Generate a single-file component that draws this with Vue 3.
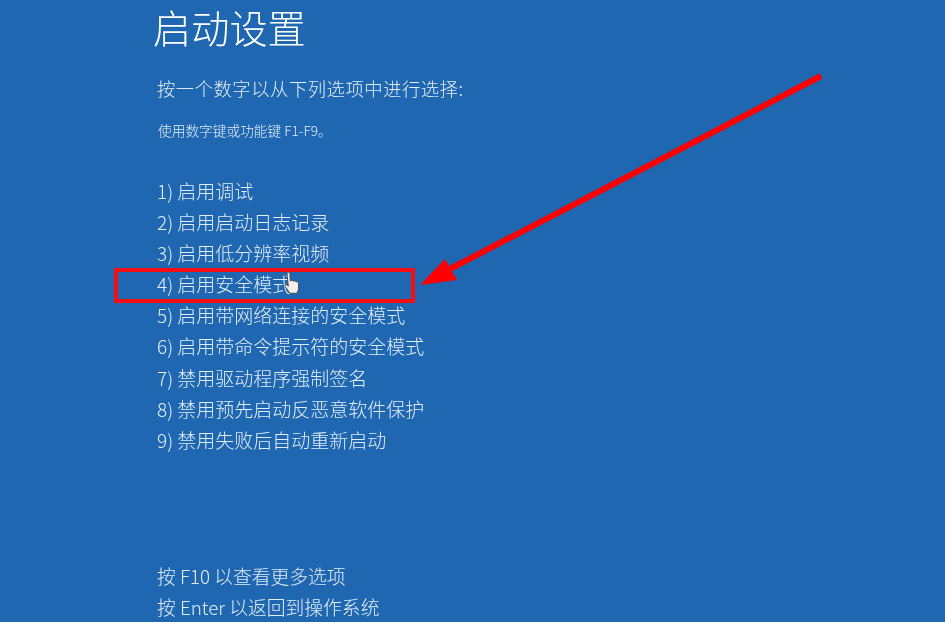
<script setup>
const options = [
  '1) 启用调试',
  '2) 启用启动日志记录',
  '3) 启用低分辨率视频',
  '4) 启用安全模式',
  '5) 启用带网络连接的安全模式',
  '6) 启用带命令提示符的安全模式',
  '7) 禁用驱动程序强制签名',
  '8) 禁用预先启动反恶意软件保护',
  '9) 禁用失败后自动重新启动',
]
</script>

<template>
  <div class="screen">
    <div class="content">
      <h1 class="title">启动设置</h1>
      <p class="prompt">按一个数字以从下列选项中进行选择:</p>
      <p class="hint">使用数字键或功能键 F1-F9。</p>
      <ul class="options">
        <li v-for="item in options" :key="item">{{ item }}</li>
      </ul>
      <div class="footer">
        <p>按 F10 以查看更多选项</p>
        <p>按 Enter 以返回到操作系统</p>
      </div>
    </div>

    <div class="highlight"></div>

    <svg class="overlay" viewBox="0 0 945 622" width="945" height="622">
      <line x1="821" y1="76" x2="446" y2="271" stroke="#ff0000" stroke-width="6" />
      <polygon points="420,285 445,259 457,280" fill="#ff0000" />
      <path
        class="hand"
        d="M287 273.500c0-1.600 2.600-1.600 2.800 0l.5 7.500c1-1.200 2.600-.8 3 .3 1-.8 2.400-.4 2.800.6 1-.5 2.300 0 2.400 1.200v5.400c0 2.400-1.200 3.500-2 4.800h-6.500c-1.200-2-3.400-4.400-5-7-.7-1.300.8-2.500 2-1.400l1.300 1.300z"
        fill="#f4f1ec"
        stroke="#4d4a48"
        stroke-width="1"
      />
    </svg>
  </div>
</template>

<style scoped>
.screen {
  position: relative;
  width: 945px;
  height: 622px;
  overflow: hidden;
  background: #1f67b1;
  color: #e4edf6;
  font-family: "Noto Sans CJK SC", "Noto Sans", sans-serif;
}

.content {
  display: flex;
  flex-direction: column;
  padding-left: 157px;
  filter: blur(0.55px);
}

.title {
  margin: 3px 0 0 -4px;
  font-size: 38.2px;
  line-height: 48px;
  font-weight: 300;
  color: #fff;
}

.prompt {
  margin: 24px 0 0;
  font-size: 18.4px;
  line-height: 26px;
  font-weight: 300;
  letter-spacing: 0.45px;
}

.hint {
  margin: 20px 0 0 1px;
  font-size: 13.7px;
  line-height: 18px;
  font-weight: 300;
}

.options {
  list-style: none;
  margin: 36px 0 0;
  padding: 0;
  font-size: 19px;
  line-height: 31.1px;
  font-weight: 300;
}

.footer {
  margin-top: 105px;
  font-size: 18.8px;
  line-height: 31px;
  font-weight: 300;
}

.footer p {
  margin: 0;
}

.highlight {
  position: absolute;
  left: 114px;
  top: 268px;
  width: 301px;
  height: 35px;
  box-sizing: border-box;
  border: 4px solid #f50d12;
}

.overlay {
  position: absolute;
  left: 0;
  top: 0;
}

.hand {
  filter: blur(0.4px);
}
</style>
